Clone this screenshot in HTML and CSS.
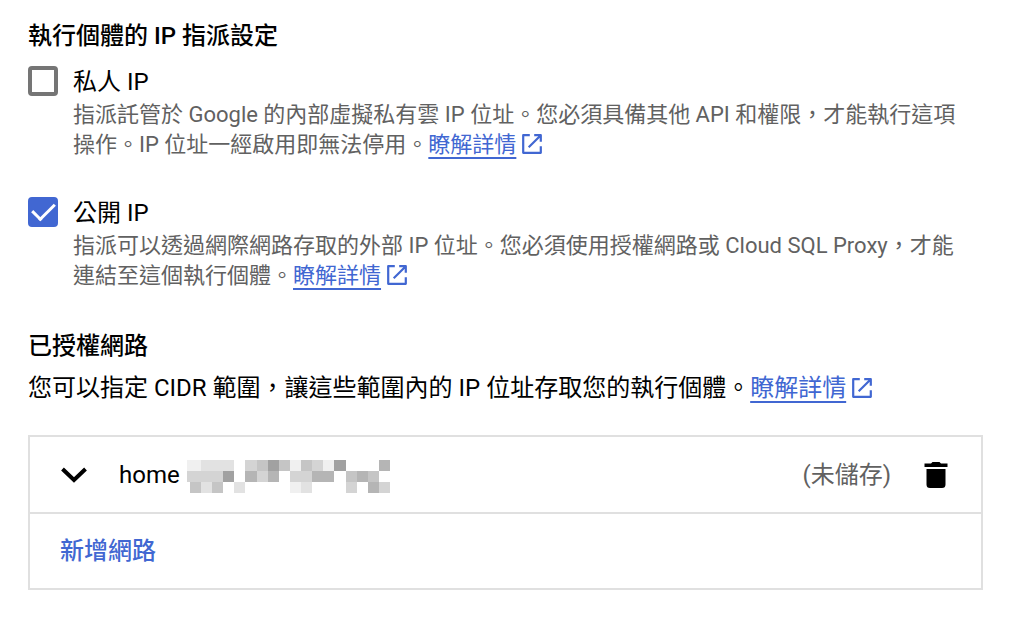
FILE: index.html
```html
<!DOCTYPE html>
<html lang="zh-TW">
<head>
  <meta charset="UTF-8">
  <meta name="viewport" content="width=device-width, initial-scale=1.0">
  <title>執行個體的 IP 指派設定</title>
  <link rel="stylesheet" href="styles.css">
</head>
<body>
  <!-- Shared icon -->
  <svg class="sprite" aria-hidden="true">
    <symbol id="open" viewBox="0 0 20 20">
      <path d="M8 2H2V18H18V12M12 2H18V8M18 2L7 13" fill="none" stroke="currentColor" stroke-width="2" stroke-linejoin="round"/>
    </symbol>
  </svg>

  <main class="settings">
    <section>
      <h2 class="title">執行個體的 IP 指派設定</h2>
      <div class="options">
        <div class="option">
          <input class="checkbox" type="checkbox" id="privateIp">
          <div class="option-body">
            <label class="option-label" for="privateIp">私人 IP</label>
            <p class="option-text">指派託管於 Google 的內部虛擬私有雲 IP 位址。您必須具備其他 API 和權限，才能執行這項操作。IP 位址一經啟用即無法停用。<a class="link" href="#"><span class="link-text">瞭解詳情</span><svg class="link-icon" aria-hidden="true"><use href="#open"/></svg></a></p>
          </div>
        </div>
        <div class="option">
          <input class="checkbox" type="checkbox" id="publicIp" checked>
          <div class="option-body">
            <label class="option-label" for="publicIp">公開 IP</label>
            <p class="option-text">指派可以透過網際網路存取的外部 IP 位址。您必須使用授權網路或 Cloud SQL Proxy，才能連結至這個執行個體。<a class="link" href="#"><span class="link-text">瞭解詳情</span><svg class="link-icon" aria-hidden="true"><use href="#open"/></svg></a></p>
          </div>
        </div>
      </div>
    </section>

    <section>
      <h2 class="title">已授權網路</h2>
      <p class="intro">您可以指定 CIDR 範圍，讓這些範圍內的 IP 位址存取您的執行個體。<a class="link" href="#"><span class="link-text">瞭解詳情</span><svg class="link-icon" aria-hidden="true"><use href="#open"/></svg></a></p>

      <div class="networks">
        <div class="network">
          <button class="icon-button" type="button" aria-label="展開">
            <svg width="28" height="18" viewBox="0 0 28 18"><path d="M2.500 3L14 14L25.500 3" fill="none" stroke="#000" stroke-width="4"/></svg>
          </button>
          <span class="network-name">home</span>
          <!-- Masked address -->
          <svg class="mask" viewBox="-0.25 0 18.25 3" preserveAspectRatio="none" shape-rendering="crispEdges" aria-hidden="true">
            <path fill="#f0f0f0" d="M-.25 0H1V1H-.25zM12 0h1v1h-1zM9 0h1v1H9zM9 2h1v1H9z"/>
            <path fill="#e2e2e2" d="M1 0h3v1H1zM1 2h1v1H1zM4 2h1v1H4zM10 2h1v1h-1z"/>
            <path fill="#d4d4d4" d="M-.25 1H3V2H-.25zM5 0h1v1H5zM6 1h1v1H6zM9 1h2v1H9zM11 0h1v1h-1zM14 2h1v1h-1zM17 2h1v1h-1z"/>
            <path fill="#c5c5c5" d="M0 2h1v1H0zM2 2h1v1H2zM6 0h1v1H6zM8 0h1v1H8zM10 0h1v1h-1zM14 1h1v1h-1zM16 1h1v1h-1z"/>
            <path fill="#b5b5b5" d="M5 1h1v1H5zM7 1h1v1H7zM11 1h2v1h-2zM15 1h1v1h-1zM16 2h1v1h-1zM17 0h1v1h-1z"/>
            <path fill="#a1a1a1" d="M3 1h1v1H3zM7 0h1v1H7zM13 0h1v1h-1z"/>
          </svg>
          <span class="network-status">(未儲存)</span>
          <button class="icon-button" type="button" aria-label="刪除">
            <svg width="24" height="28" viewBox="0 0 24 28"><path d="M.5 2.500H7L8.500 1H15.500L17 2.500H23.500V6H.5zM2.500 8H21.500V23.500Q21.500 27 18 27H6Q2.500 27 2.500 23.500z"/></svg>
          </button>
        </div>
        <button class="add-button" type="button">新增網路</button>
      </div>
    </section>
  </main>
</body>
</html>
```

FILE: styles.css
```css
* {
  margin: 0;
  padding: 0;
  box-sizing: border-box;
}
body {
  font-family: Roboto, "Noto Sans CJK TC", sans-serif;
  font-size: 24px;
  line-height: 32px;
  background: #fff;
  color: #000;
}
button {
  font: inherit;
  border: none;
  background: none;
  cursor: pointer;
}
svg {
  display: block;
}
.sprite {
  position: absolute;
  width: 0;
  height: 0;
}
.settings {
  display: flex;
  flex-direction: column;
  gap: 39px;
  padding: 20px 41px 28px 28px;
}
.title {
  font-size: 24px;
  font-weight: 500;
}

/* Options */
.options {
  display: flex;
  flex-direction: column;
  gap: 37px;
  margin-top: 14px;
}
.option {
  display: flex;
  align-items: flex-start;
  gap: 15px;
}
.option-body {
  flex: 1;
}
.option-label {
  display: block;
}
.option-text {
  margin-top: 2px;
  padding-right: 12px;
  font-size: 22px;
  line-height: 30px;
  color: #616161;
}
.checkbox {
  appearance: none;
  flex: none;
  display: grid;
  place-content: center;
  width: 30px;
  height: 30px;
  border: 4px solid #757575;
  border-radius: 4px;
  cursor: pointer;
}
.checkbox:checked {
  border-color: #4167d2;
  background: #4167d2;
}
.checkbox:checked::after {
  content: "";
  width: 10px;
  height: 19px;
  border: solid #fff;
  border-width: 0 3px 3px 0;
  transform: translateY(-3px) rotate(45deg);
}

/* Links */
.link {
  color: #4167d2;
  text-decoration: none;
  white-space: nowrap;
}
.link-text {
  text-decoration: underline 2px;
  text-decoration-skip-ink: none;
  text-underline-offset: 5px;
}
.link-icon {
  display: inline-block;
  width: 22px;
  height: 22px;
  margin-left: 5px;
  vertical-align: -3px;
}

/* Authorized networks */
.intro {
  margin-top: 10px;
}
.networks {
  margin-top: 31px;
  border: 2px solid #e0e0e0;
}
.network {
  display: flex;
  align-items: center;
  height: 77px;
  padding: 0 33px 0 30px;
  border-bottom: 2px solid #e0e0e0;
}
.network-name {
  margin-left: 31px;
}
.mask {
  width: 203px;
  height: 33px;
  margin: 4px 0 0 7px;
}
.network-status {
  margin-left: auto;
  margin-right: 33px;
  color: #616161;
}
.add-button {
  display: block;
  width: 100%;
  padding: 21px 30px;
  color: #4167d2;
  font-weight: 500;
  text-align: left;
}
```
